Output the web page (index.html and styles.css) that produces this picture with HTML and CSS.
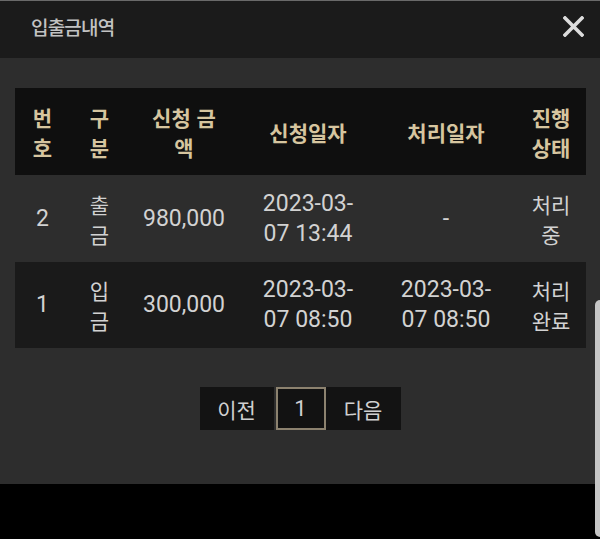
FILE: index.html
```html
<!DOCTYPE html>
<html lang="ko">
<head>
<meta charset="utf-8">
<title>입출금내역</title>
<link rel="stylesheet" href="styles.css">
</head>
<body>
<div class="modal">
  <div class="modal-header">
    <h1 class="modal-title">입출금내역</h1>
    <button class="close-btn" aria-label="닫기">
      <svg width="21" height="21" viewBox="0 0 21 21"><path d="M2 2 L19 19 M19 2 L2 19" stroke="#dcdcdc" stroke-width="3.6" stroke-linecap="square" fill="none"/></svg>
    </button>
  </div>
  <div class="modal-body">
    <table class="history">
      <colgroup>
        <col class="c-no"><col class="c-type"><col class="c-amount"><col class="c-req"><col class="c-done"><col class="c-status">
      </colgroup>
      <thead>
        <tr>
          <th class="t-no">번호</th>
          <th class="t-type">구분</th>
          <th class="t-amount">신청 금액</th>
          <th class="t-req">신청일자</th>
          <th class="t-done">처리일자</th>
          <th class="t-status">진행상태</th>
        </tr>
      </thead>
      <tbody>
        <tr class="row-a">
          <td class="t-no num">2</td>
          <td class="t-type">출금</td>
          <td class="t-amount num">980,000</td>
          <td class="t-req num">2023-03-<wbr>07 13:44</td>
          <td class="t-done num">-</td>
          <td class="t-status">처리중</td>
        </tr>
        <tr class="row-b">
          <td class="t-no num">1</td>
          <td class="t-type">입금</td>
          <td class="t-amount num">300,000</td>
          <td class="t-req num">2023-03-<wbr>07 08:50</td>
          <td class="t-done num">2023-03-<wbr>07 08:50</td>
          <td class="t-status">처리완료</td>
        </tr>
      </tbody>
    </table>
    <nav class="pager">
      <button class="pg pg-prev">이전</button>
      <button class="pg pg-cur">1</button>
      <button class="pg pg-next">다음</button>
    </nav>
  </div>
  <div class="scrollbar"></div>
</div>
<div class="bottom"></div>
</body>
</html>
```
FILE: styles.css
```css
html, body {
  margin: 0;
  padding: 0;
  background: #000;
}
body {
  font-family: "Noto Sans CJK KR", "Noto Sans", sans-serif;
  width: 600px;
  height: 539px;
  overflow: hidden;
  position: relative;
}
.modal {
  height: 484px;
  background: #2d2d2d;
  display: flex;
  flex-direction: column;
}
.modal-header {
  height: 58px;
  flex: 0 0 58px;
  box-sizing: border-box;
  border-top: 1px solid #6a6a6a;
  background: #1b1b1b;
  display: flex;
  align-items: center;
  justify-content: space-between;
  padding: 0 16px 6px 31px;
}
.modal-title {
  margin: 0;
  font-size: 19px;
  font-weight: 500;
  color: #c2c2c2;
  letter-spacing: -0.8px;
}
.close-btn {
  background: none;
  border: 0;
  padding: 0;
  width: 21px;
  height: 21px;
  display: flex;
}
.modal-body {
  padding: 30px 14px 0 15px;
}
.history {
  width: 571px;
  border-collapse: collapse;
  table-layout: fixed;
}
.c-no { width: 55px; }
.c-type { width: 59px; }
.c-amount { width: 110px; }
.c-req { width: 138px; }
.c-done { width: 138px; }
.c-status { width: 71px; }
.history th, .history td {
  text-align: center;
  vertical-align: middle;
  font-size: 21px;
  line-height: 30px;
  padding: 0;
}
.history th {
  color: #d6c59f;
  font-weight: 700;
  height: 87px;
}
.history thead tr { background: #0f0f0f; }
.history td {
  color: #d2d2d2;
  font-weight: 400;
}
.history td.num {
  font-family: Roboto, "Noto Sans", sans-serif;
  font-size: 23px;
}
.row-a td { height: 87px; }
.row-b { background: #1a1a1a; }
.row-b td { height: 86px; }
.history .t-no { padding: 0 10px; }
.history .t-type { padding: 0 12px; }
.history .t-amount { padding: 0 20px; }
.history td.t-amount { padding: 0; white-space: nowrap; }
.history .t-req { padding: 0 20px; }
.history .t-done { padding: 0 20px; }
.history .t-status { padding: 0 13px 0 14px; }
.pager {
  display: flex;
  justify-content: center;
  margin-top: 39px;
  padding-right: 1px;
}
.pg {
  font-family: inherit;
  height: 43px;
  border: 0;
  background: #131313;
  color: #d0d0d0;
  font-size: 21px;
  padding: 0;
}
.pg-prev { width: 74px; margin-right: 2px; }
.pg-cur {
  width: 50px;
  border: 2px solid #8c826f;
  background: #121212;
  font-family: Roboto, "Noto Sans", sans-serif;
  font-size: 22px;
}
.pg-next { width: 75px; }
.scrollbar {
  position: absolute;
  right: 0;
  top: 300px;
  width: 5px;
  height: 237px;
  background: #c6c6c6;
  border-radius: 6px 0 0 6px;
}
```
